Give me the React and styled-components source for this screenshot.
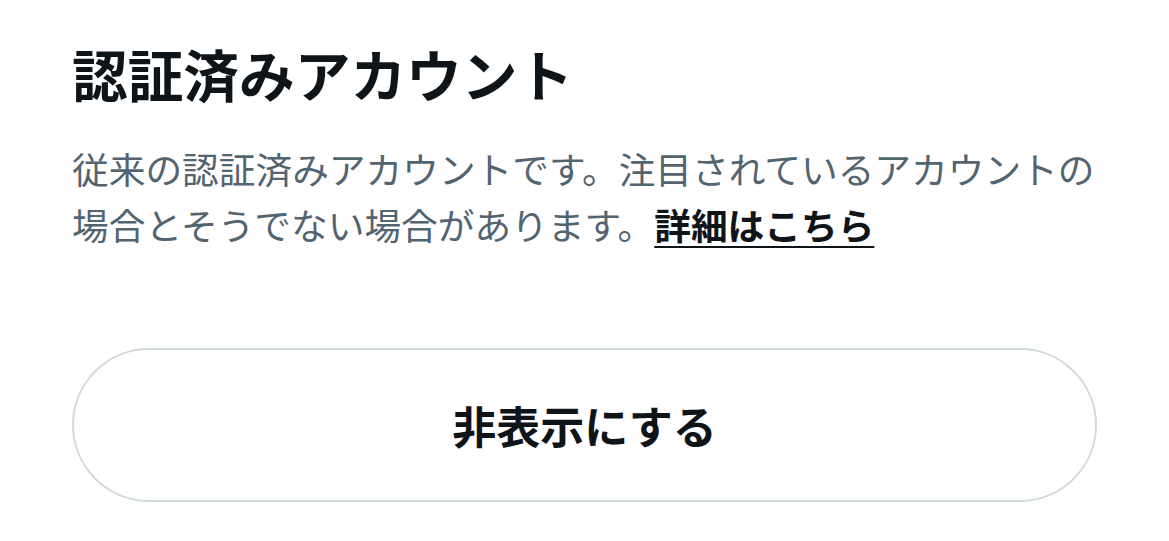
import styled, { createGlobalStyle } from 'styled-components'

const GlobalStyle = createGlobalStyle`
  body {
    margin: 0;
    background: #ffffff;
    font-family: "Noto Sans CJK JP", "Noto Sans", sans-serif;
  }
`

export default function App() {
  return (
    <>
      <GlobalStyle />
      <Sheet>
        <Title>認証済みアカウント</Title>
        <Description>
          従来の認証済みアカウントです。注目されているアカウントの場合とそうでない場合があります。
          <Link href='#'>詳細はこちら</Link>
        </Description>
        <HideButton>非表示にする</HideButton>
      </Sheet>
    </>
  )
}

const Sheet = styled.div`
  display: flex;
  flex-direction: column;
  width: 1025px;
  padding: 35px 72px 0 72px;
`

const Title = styled.h1`
  margin: 0;
  font-size: 55.7px;
  line-height: 76px;
  font-weight: 700;
  color: #0f1419;
`

const Description = styled.p`
  margin: 29px 0 0;
  font-size: 36.7px;
  line-height: 56px;
  color: #536471;
`

const Link = styled.a`
  color: #0f1419;
  font-weight: 700;
  text-decoration: underline;
  text-underline-offset: 6px;
  text-decoration-thickness: 2px;
`

const HideButton = styled.button`
  margin-top: 96px;
  height: 154px;
  width: 100%;
  border: 2px solid #cfd9de;
  border-radius: 77px;
  background: #ffffff;
  font-family: inherit;
  font-size: 44px;
  font-weight: 700;
  color: #0f1419;
`
